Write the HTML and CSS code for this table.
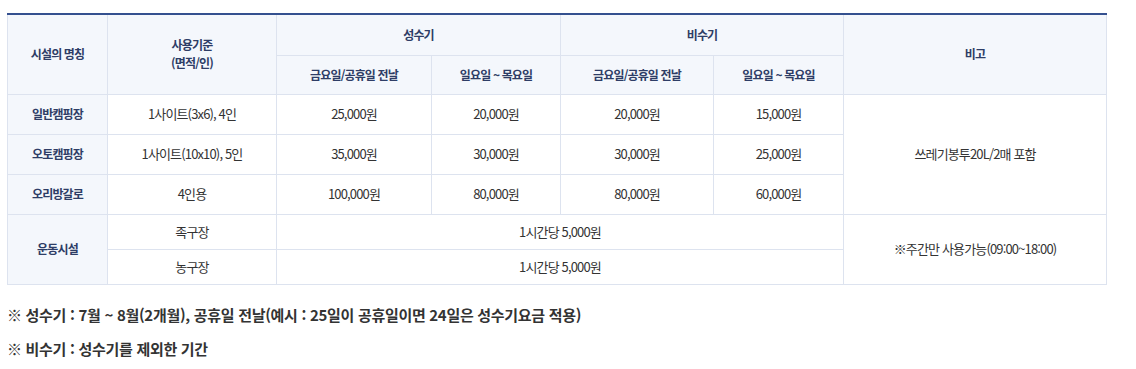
FILE: index.html
```html
<!DOCTYPE html>
<html lang="ko">
<head>
<meta charset="utf-8">
<title>시설 사용료</title>
<link rel="stylesheet" href="styles.css">
</head>
<body>
<div class="wrap">
  <table class="fee">
    <colgroup>
      <col class="c1"><col class="c2"><col class="c3"><col class="c4"><col class="c5"><col class="c6"><col class="c7">
    </colgroup>
    <thead>
      <tr class="h1">
        <th rowspan="2">시설의 명칭</th>
        <th rowspan="2">사용기준<br>(면적/인)</th>
        <th colspan="2">성수기</th>
        <th colspan="2">비수기</th>
        <th rowspan="2">비고</th>
      </tr>
      <tr class="h2">
        <th>금요일/공휴일 전날</th>
        <th>일요일 ~ 목요일</th>
        <th>금요일/공휴일 전날</th>
        <th>일요일 ~ 목요일</th>
      </tr>
    </thead>
    <tbody>
      <tr class="r">
        <th>일반캠핑장</th>
        <td>1사이트(3x6), 4인</td>
        <td>25,000원</td>
        <td>20,000원</td>
        <td>20,000원</td>
        <td>15,000원</td>
        <td rowspan="3">쓰레기봉투20L/2매 포함</td>
      </tr>
      <tr class="r">
        <th>오토캠핑장</th>
        <td>1사이트(10x10), 5인</td>
        <td>35,000원</td>
        <td>30,000원</td>
        <td>30,000원</td>
        <td>25,000원</td>
      </tr>
      <tr class="r">
        <th>오리방갈로</th>
        <td>4인용</td>
        <td>100,000원</td>
        <td>80,000원</td>
        <td>80,000원</td>
        <td>60,000원</td>
      </tr>
      <tr class="s">
        <th rowspan="2">운동시설</th>
        <td>족구장</td>
        <td colspan="4">1시간당 5,000원</td>
        <td rowspan="2">※주간만 사용가능(09:00~18:00)</td>
      </tr>
      <tr class="s">
        <td>농구장</td>
        <td colspan="4">1시간당 5,000원</td>
      </tr>
    </tbody>
  </table>
  <div class="notes">
    <p>※ 성수기 : 7월 ~ 8월(2개월), 공휴일 전날(예시 : 25일이 공휴일이면 24일은 성수기요금 적용)</p>
    <p>※ 비수기 : 성수기를 제외한 기간</p>
  </div>
</div>
</body>
</html>
```
FILE: styles.css
```css
html, body {
  margin: 0;
  padding: 0;
  background: #fff;
}
body {
  font-family: "Noto Sans CJK KR", "Noto Sans", sans-serif;
  color: #333;
}
.wrap {
  padding: 13px 0 0 7px;
}
.fee {
  width: 1099px;
  table-layout: fixed;
  border-collapse: collapse;
  border-top: 2px solid #34508f;
}
.c1 { width: 100px; }
.c2 { width: 169px; }
.c3 { width: 155px; }
.c4 { width: 129px; }
.c5 { width: 153px; }
.c6 { width: 130px; }
.c7 { width: 263px; }
.fee th, .fee td {
  border: 1px solid #dde3ef;
  padding: 0;
  text-align: center;
  vertical-align: middle;
  line-height: 18px;
}
.fee th {
  background: #f4f7fc;
  color: #2e3d66;
  font-size: 12px;
  font-weight: 700;
  letter-spacing: -0.85px;
}
.fee td {
  background: #fff;
  color: #333;
  font-size: 13px;
  font-weight: 400;
  letter-spacing: -0.85px;
}
.fee tr.h1 { height: 41px; }
.fee tr.h2 { height: 39px; }
.fee tr.r { height: 40px; }
.fee tr.s { height: 35px; }
.notes {
  padding-top: 20px;
}
.notes p {
  margin: 0;
  font-size: 15px;
  font-weight: 700;
  color: #333;
  letter-spacing: -0.3px;
  line-height: 20px;
}
.notes p + p {
  margin-top: 14px;
}
```
